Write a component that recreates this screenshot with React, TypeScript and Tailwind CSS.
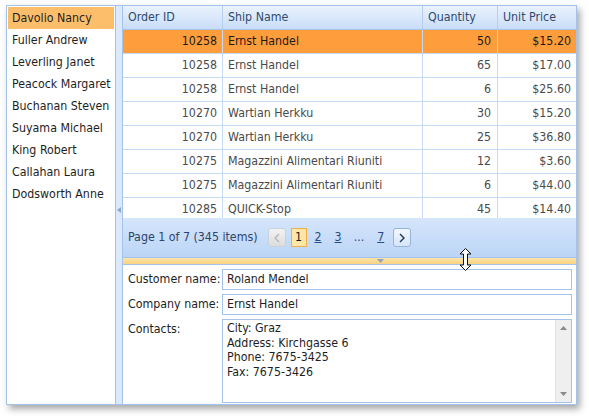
import React from 'react';

const employees = [
  'Davolio Nancy',
  'Fuller Andrew',
  'Leverling Janet',
  'Peacock Margaret',
  'Buchanan Steven',
  'Suyama Michael',
  'King Robert',
  'Callahan Laura',
  'Dodsworth Anne',
];

const orders = [
  ['10258', 'Ernst Handel', '50', '$15.20'],
  ['10258', 'Ernst Handel', '65', '$17.00'],
  ['10258', 'Ernst Handel', '6', '$25.60'],
  ['10270', 'Wartian Herkku', '30', '$15.20'],
  ['10270', 'Wartian Herkku', '25', '$36.80'],
  ['10275', 'Magazzini Alimentari Riuniti', '12', '$3.60'],
  ['10275', 'Magazzini Alimentari Riuniti', '6', '$44.00'],
  ['10285', 'QUICK-Stop', '45', '$14.40'],
];

const cols = 'grid grid-cols-[100px_200px_75px_1fr]';

export default function App() {
  return (
    <div className="relative w-[589px] h-[419px] bg-white pl-[6px] pt-[5px] font-['DejaVu_Sans_Condensed','Liberation_Sans',sans-serif] text-[12.3px]">
      {/* Frame */}
      <div className="flex w-[571px] h-[400px] border border-[#a4c3eb] bg-white shadow-[3px_4px_7px_rgba(0,0,0,0.35)]">
        {/* Employees list */}
        <div className="w-[108px] p-px shrink-0">
          {employees.map((name, i) => (
            <div
              key={name}
              className={`h-[22px] flex items-center pl-[4px] pt-px text-[#1e1e1e] ${i === 0 ? 'bg-[#fdbe6b]' : ''}`}
            >
              {name}
            </div>
          ))}
        </div>

        {/* Vertical splitter */}
        <div className="w-[8px] shrink-0 border-x border-[#a4c3eb] bg-[#dce9fc] flex items-center justify-center pt-[10px]">
          <svg width="4" height="6" viewBox="0 0 4 6">
            <path d="M4 0 L0 3 L4 6 Z" fill="#8ea6c6" />
          </svg>
        </div>

        {/* Right side */}
        <div className="flex-1 flex flex-col min-w-0">
          {/* Grid header */}
          <div className={`${cols} h-[24px] border-b border-[#a4c3eb] bg-gradient-to-b from-[#eaf2fd] via-[#dae8fb] to-[#c9dcf6] text-[#2e4a70]`}>
            {['Order ID', 'Ship Name', 'Quantity', 'Unit Price'].map((h) => (
              <div key={h} className="flex items-center pl-[5px] border-r border-[#b7cfee] last:border-r-0">
                {h}
              </div>
            ))}
          </div>

          {/* Grid rows */}
          <div className="h-[188px] overflow-hidden">
            {orders.map((r, i) => (
              <div
                key={i}
                className={`${cols} h-[24px] border-b border-[#c6daf5] ${i === 0 ? 'bg-[#fe9d3c] text-[#1a1a1a]' : 'text-[#4a4a4a]'}`}
              >
                <div className="flex items-center justify-end pr-[5px] border-r border-[#c6daf5]">{r[0]}</div>
                <div className="flex items-center pl-[5px] border-r border-[#c6daf5]">{r[1]}</div>
                <div className="flex items-center justify-end pr-[6px] border-r border-[#c6daf5]">{r[2]}</div>
                <div className="flex items-center justify-end pr-[5px]">{r[3]}</div>
              </div>
            ))}
          </div>

          {/* Pager */}
          <div className="h-[39px] shrink-0 flex items-center pl-[5px] bg-gradient-to-b from-[#d6e6fb] via-[#c8ddf9] to-[#bcd5f6] text-[#2e4468]">
            <span>Page 1 of 7 (345 items)</span>
            <div className="ml-[10px] w-[18px] h-[19px] rounded-[3px] border border-[#c9d2dc] bg-gradient-to-b from-[#f3f3f3] to-[#dcdcdc] flex items-center justify-center">
              <svg width="6" height="10" viewBox="0 0 6 10">
                <path d="M5 1 L1 5 L5 9" stroke="#b4b4b4" strokeWidth="1.3" fill="none" />
              </svg>
            </div>
            <div className="ml-[5px] w-[16px] h-[19px] border border-[#f2b04a] bg-[#fde6a6] flex items-center justify-center text-[#1a1a1a]">
              1
            </div>
            <span className="ml-[8px] underline text-[#2b4a80]">2</span>
            <span className="ml-[13px] underline text-[#2b4a80]">3</span>
            <span className="ml-[12px] text-[#2b4a80]">...</span>
            <span className="ml-[13px] underline text-[#2b4a80]">7</span>
            <div className="ml-[9px] w-[18px] h-[19px] rounded-[3px] border border-[#98b4d8] bg-gradient-to-b from-[#f2f7fe] to-[#d6e5f9] flex items-center justify-center">
              <svg width="6" height="10" viewBox="0 0 6 10">
                <path d="M1 1 L5 5 L1 9" stroke="#1f3556" strokeWidth="1.4" fill="none" />
              </svg>
            </div>
          </div>

          {/* Horizontal splitter */}
          <div className="h-[7px] shrink-0 border-t border-[#a4c3eb] bg-gradient-to-b from-[#fde4a9] to-[#fbd27f] flex justify-center pl-[62px]">
            <svg width="7" height="5" viewBox="0 0 7 5" className="mt-[1px]">
              <path d="M0 0 L7 0 L3.5 4 Z" fill="#8fa3bc" />
            </svg>
          </div>

          {/* Detail form */}
          <div className="flex-1 border-t border-[#a4c3eb] pt-[4px] pl-[5px] pr-[4px] flex flex-col gap-[4px] text-[#1e1e1e]">
            <div className="flex items-center">
              <span className="w-[94px] shrink-0">Customer name:</span>
              <div className="flex-1 h-[21px] border border-[#a4c3eb] flex items-center pl-[4px]">Roland Mendel</div>
            </div>
            <div className="flex items-center">
              <span className="w-[94px] shrink-0">Company name:</span>
              <div className="flex-1 h-[21px] border border-[#a4c3eb] flex items-center pl-[4px]">Ernst Handel</div>
            </div>
            <div className="flex items-start">
              <span className="w-[94px] shrink-0 pt-[1px]">Contacts:</span>
              <div className="flex-1 h-[84px] border border-[#a4c3eb] flex">
                <div className="flex-1 pl-[4px] pt-[1px] leading-[14.5px]">
                  <div>City: Graz</div>
                  <div>Address: Kirchgasse 6</div>
                  <div>Phone: 7675-3425</div>
                  <div>Fax: 7675-3426</div>
                </div>
                <div className="w-[16px] bg-[#efefef] border-l border-[#e4e4e4] flex flex-col items-center justify-between py-[6px]">
                  <svg width="7" height="4" viewBox="0 0 7 4">
                    <path d="M3.5 0 L7 4 L0 4 Z" fill="#8a8a8a" />
                  </svg>
                  <svg width="7" height="4" viewBox="0 0 7 4">
                    <path d="M0 0 L7 0 L3.5 4 Z" fill="#8a8a8a" />
                  </svg>
                </div>
              </div>
            </div>
          </div>
        </div>
      </div>

      {/* Resize cursor over the splitter */}
      <svg className="absolute left-[459px] top-[248px]" width="13" height="23" viewBox="0 0 13 23">
        <path
          d="M6.5 0.5 L12 6 L8.5 6 L8.5 17 L12 17 L6.5 22.5 L1 17 L4.5 17 L4.5 6 L1 6 Z"
          fill="#ffffff"
          stroke="#111111"
          strokeWidth="1"
          strokeLinejoin="miter"
        />
      </svg>
    </div>
  );
}
